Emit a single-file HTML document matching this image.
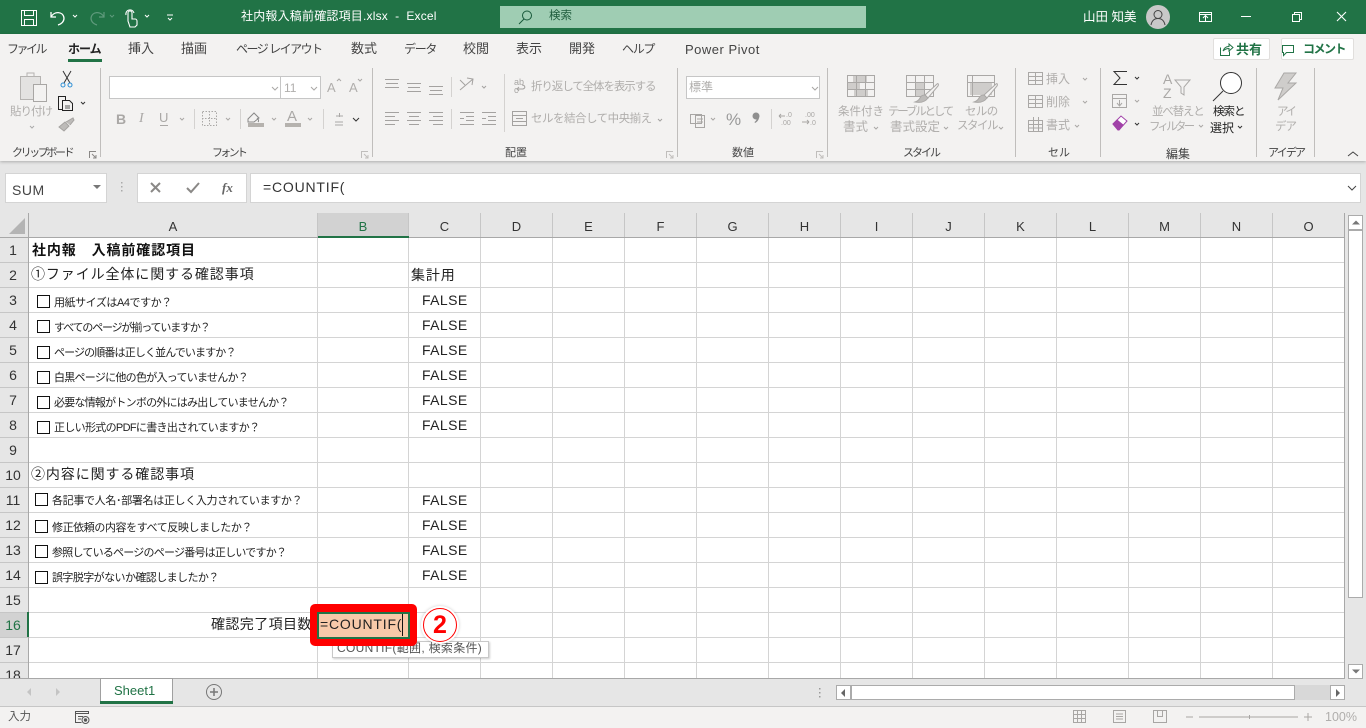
<!DOCTYPE html>
<html lang="ja"><head><meta charset="utf-8"><title>Excel</title>
<style>
html,body{margin:0;padding:0;width:1366px;height:728px;overflow:hidden;background:#e6e6e6}
body{position:relative;font-family:"Liberation Sans","Noto Sans CJK JP",sans-serif;color:#222}
.a{position:absolute;white-space:nowrap;line-height:1}
.b{position:absolute}
.t{font-size:13px;color:#444;top:42px}
.tk{font-size:12px;top:43px}
.g{font-size:11px;color:#444;top:148px}
.d{color:#b0aeac;font-size:11.5px}
.h{position:absolute;top:219px;font-size:13px;text-align:center;color:#333}
.r{position:absolute;left:0;width:26px;text-align:center;font-size:14px;color:#333;line-height:25px;height:25px}
.c{position:absolute;font-size:11px;color:#222;line-height:1;white-space:nowrap}
.f{position:absolute;left:422px;font-size:14px;color:#222;letter-spacing:.4px;line-height:1}
.k{position:absolute;width:11px;height:11px;border:1px solid #111;background:#fff}
.l{position:absolute;font-size:14px;color:#222;line-height:1;white-space:nowrap;letter-spacing:.9px}
svg{position:absolute;overflow:visible}
</style></head><body>

<!-- title bar -->
<div class="b" style="left:0;top:0;width:1366px;height:34px;background:#217346"></div>
<svg style="left:0;top:0" width="1366" height="34" fill="none" stroke="#fff" stroke-width="1">
<path d="M21.5 10.5h15v15h-15zM24.5 10.500v5h9v-5M24.5 25.500v-6h9v6"/>
<path d="M51 12v5h5M51 17c3-6 12-6 13 1 0 4-3 6-6 7" stroke-width="1.3"/>
<path d="M73 15l2 2 2-2" />
<path d="M104 12v5h-5M104 17c-3-6-12-6-13 1 0 4 3 6 6 7" stroke="#5f9a7c" stroke-width="1.2"/>
<path d="M110 15l2 2 2-2" stroke="#5f9a7c"/>
<path d="M128 21v-8a2 2 0 014 0v6h3a2 2 0 012 2v4l-2 2h-5zM126 15a4 4 0 018-2" stroke-width="1.1"/>
<path d="M145 15l2 2 2-2M167 15h6M168 18l2 2 2-2" />
</svg>
<div class="a" style="left:241px;top:10px;font-size:12px;color:#fff;letter-spacing:.2px">社内報入稿前確認項目.xlsx&nbsp; - &nbsp;Excel</div>
<div class="b" style="left:500px;top:6px;width:366px;height:22px;background:#9fcdb3"></div>
<svg style="left:518px;top:9px" width="18" height="16" fill="none" stroke="#17583a"><circle cx="9" cy="6.500" r="4.500"/><path d="M6 10l-5 5"/></svg>
<div class="a" style="left:549px;top:11px;font-size:11.500px;color:#1e5b3c">検索</div>
<div class="a" style="left:1083px;top:11px;font-size:12.500px;color:#fff">山田 知美</div>
<div class="b" style="left:1146px;top:5px;width:24px;height:24px;border-radius:50%;background:#c8c8c8"></div>
<svg style="left:1146px;top:5px" width="24" height="24" fill="none" stroke="#444"><circle cx="12" cy="9.500" r="4"/><path d="M5 20c1-5 4-6.500 7-6.500s6 1.500 7 6.500"/></svg>
<svg style="left:1190px;top:8px" width="170" height="18" fill="none" stroke="#fff">
<path d="M9.500 4.500h12v9h-12zM9.500 6.500h12M13 10l2.500-2.500L18 10M15.500 8v5"/>
<path d="M51 8.500h10"/>
<path d="M102.500 6.500h7v7h-7zM104.500 6.500v-2h7v7h-2"/>
<path d="M147 4l9 9M156 4l-9 9" stroke-width="1.1"/>
</svg>

<!-- ribbon -->
<div class="b" style="left:0;top:34px;width:1366px;height:127px;background:#f3f2f1;box-shadow:0 1px 3px rgba(0,0,0,.25)"></div>
<div class="a t tk" style="left:7px;letter-spacing:-2.5px">ファイル</div>
<div class="a t tk" style="left:68px;font-weight:bold;color:#222;letter-spacing:-1px">ホーム</div>
<div class="b" style="left:68px;top:59px;width:34px;height:3px;background:#217346"></div>
<div class="a t" style="left:128px">挿入</div>
<div class="a t" style="left:181px">描画</div>
<div class="a t tk" style="left:236px;letter-spacing:-1.5px">ページ レイアウト</div>
<div class="a t" style="left:351px">数式</div>
<div class="a t tk" style="left:404px;letter-spacing:-1.300px">データ</div>
<div class="a t" style="left:463px">校閲</div>
<div class="a t" style="left:516px">表示</div>
<div class="a t" style="left:569px">開発</div>
<div class="a t tk" style="left:622px;letter-spacing:-1.300px">ヘルプ</div>
<div class="a" style="left:685px;top:43px;font-size:13px;color:#444;letter-spacing:.5px">Power Pivot</div>

<!-- share / comment -->
<div class="b" style="left:1213px;top:38px;width:57px;height:22px;background:#fff;border:1px solid #e1dfdd;box-sizing:border-box;border-radius:2px"></div>
<div class="b" style="left:1281px;top:38px;width:73px;height:22px;background:#fff;border:1px solid #e1dfdd;box-sizing:border-box;border-radius:2px"></div>
<svg style="left:1219px;top:42px" width="130" height="15" fill="none" stroke="#217346"><path d="M1.500 5.500v8h9v-4M4 9c1-3 3-4.500 6-4.500V2l4 3.500-4 3.500V6.500c-2 0-4 .5-6 2.500"/><path d="M63.500 3.500h11v7h-7l-3 3v-3h-1z"/></svg>
<div class="a" style="left:1236px;top:43px;font-size:13px;font-weight:bold;color:#217346">共有</div>
<div class="a" style="left:1303px;top:43px;font-size:12px;font-weight:bold;color:#217346;letter-spacing:-1.500px">コメント</div>

<!-- ribbon separators -->
<svg style="left:0;top:0" width="1366" height="165" stroke="#c0bebc" fill="none">
<path d="M100.500 68v89M372.500 68v89M677.500 68v89M827.500 68v89M1015.500 68v89M1100.500 68v89M1256.500 68v89M1314.500 68v89"/>
<path stroke="#d4d2d0" d="M194.500 109v20M240.500 109v20M323.500 109v20M451.500 77v20M451.500 109v20M504.500 74v58M771.500 109v20"/>
</svg>

<!-- clipboard -->
<svg style="left:0;top:0" width="100" height="140" fill="none">
<path d="M20.500 76.500h20v23h-20z" fill="#e3e2e1" stroke="#b5b3b1"/>
<path d="M27 76v-3h7v3" stroke="#b5b3b1"/>
<path d="M33.500 84.500h13v17h-13z" fill="#f3f2f1" stroke="#a8a6a4"/>
<path d="M63 71l7 12M71 71l-7 12" stroke="#333"/>
<circle cx="63" cy="85" r="2" stroke="#2d8fd5"/><circle cx="70" cy="85" r="2" stroke="#2d8fd5"/>
<path d="M58.500 96.500h7v13h-7z" stroke="#222"/><path d="M62.500 100.500h7l3 3v7h-10z" fill="#f3f2f1" stroke="#222"/>
<path d="M65 106h5M65 108h5" stroke="#222" stroke-width=".7"/>
<path d="M81 102l2 2 2-2" stroke="#333"/>
<path d="M59 127l6-5 4 4-5 5zM66 122l7-4 1 2-4 5" fill="#bdbbb9" stroke="#a5a3a1"/>
<path d="M30 126l2 2 2-2" stroke="#aaa"/>
</svg>
<div class="a d" style="left:10px;top:107px;letter-spacing:-1px">貼り付け</div>
<div class="a g" style="left:12px;letter-spacing:-2.400px">クリップボード</div>
<svg style="left:89px;top:151px" width="8" height="8" fill="none" stroke="#8a8886"><path d="M.5 7V.5H7M3 3l4 4M7 4v3H4"/></svg>

<!-- font -->
<div class="b" style="left:109px;top:76px;width:172px;height:23px;background:#fff;border:1px solid #c6c6c6;box-sizing:border-box"></div>
<div class="b" style="left:280px;top:76px;width:41px;height:23px;background:#fff;border:1px solid #c6c6c6;box-sizing:border-box"></div>
<div class="a d" style="left:284px;top:82px;font-size:12px">11</div>
<div class="a d" style="left:327px;top:81px;font-size:13px">A</div>
<div class="a d" style="left:349px;top:81px;font-size:13px">A</div>
<svg style="left:0;top:0" width="380" height="135" fill="none" stroke="#aaa8a6">
<path d="M272 87l3 3 3-3M311 87l3 3 3-3M337 81l2-2 2 2M358 79l2 2 2-2"/>
<path d="M180 118l2 2 2-2M226 118l2 2 2-2M272 118l2 2 2-2M308 118l2 2 2-2"/>
<path d="M202.500 111.500h14v14h-14z" stroke-dasharray="1.500 1.500"/><path d="M202 118.500h15M209.500 111v14" stroke-dasharray="1.500 1.500"/>
<path d="M248 119l6-6 5 5-5 4h-6zM257 118c2 2 2 3 1 4" stroke="#888"/>
<path d="M160 125.500h8" />
<path d="M336 116h7M339.500 113v4M335 122h8M335 125h8"/>
<path d="M353 118l3 3 3-3" stroke="#333"/>
</svg>
<div class="b" style="left:248px;top:123px;width:16px;height:4px;background:#b5b2ae"></div>
<div class="b" style="left:285px;top:123px;width:16px;height:4px;background:#b5b2ae"></div>
<div class="a" style="left:116px;top:112px;font-size:14px;font-weight:bold;color:#aaa8a6">B</div>
<div class="a" style="left:139px;top:112px;font-size:14px;font-style:italic;font-family:'Liberation Serif',serif;color:#aaa8a6">I</div>
<div class="a" style="left:159px;top:111px;font-size:13px;color:#aaa8a6">U</div>
<div class="a" style="left:287px;top:109px;font-size:15px;color:#aaa8a6">A</div>
<div class="a g" style="left:212px;letter-spacing:-2.700px">フォント</div>
<svg style="left:361px;top:151px" width="8" height="8" fill="none" stroke="#c0bebc"><path d="M.5 7V.5H7M3 3l4 4M7 4v3H4"/></svg>

<!-- alignment -->
<svg style="left:0;top:0" width="680" height="135" fill="none" stroke="#a4a2a0">
<path d="M385 79.500h14M386 83.500h12M385 87.500h14"/>
<path d="M407 83.500h14M408 87.500h12M407 91.500h14"/>
<path d="M429 86.500h14M430 90.500h12M429 94.500h14"/>
<path d="M385 112.500h14M385 116.500h10M385 120.500h14M385 124.500h10"/>
<path d="M407 112.500h14M409 116.500h10M407 120.500h14M409 124.500h10"/>
<path d="M429 112.500h14M433 116.500h10M429 120.500h14M433 124.500h10"/>
<path d="M460 90l13-11M467 78l6 1-1 6M460 80l5 5"/><path d="M482 86l2 2 2-2"/>
<path d="M460 112.500h14M466 116.500h8M466 120.500h8M460 124.500h14M460 118.500h4M482 112.500h14M488 116.500h8M488 120.500h8M482 124.500h14M482 118.500h4"/>
<path d="M512.500 111.500h14v14h-14zM513 115.500h13M513 121.500h13M516 118.500h7"/>
<path d="M522 85c3 0 4 3 1 4h-6M519 87l-2 2 2 2"/>
<path d="M658 119l2 2 2-2"/>
</svg>
<div class="a" style="left:514px;top:78px;font-size:9px;color:#a8a6a4">ab</div>
<div class="a" style="left:514px;top:86px;font-size:9px;color:#a8a6a4">c</div>
<div class="a d" style="left:531px;top:82px;letter-spacing:-1.100px">折り返して全体を表示する</div>
<div class="a d" style="left:531px;top:114px;letter-spacing:-.5px">セルを結合して中央揃え</div>
<div class="a g" style="left:505px">配置</div>
<svg style="left:666px;top:151px" width="8" height="8" fill="none" stroke="#c0bebc"><path d="M.5 7V.5H7M3 3l4 4M7 4v3H4"/></svg>

<!-- number -->
<div class="b" style="left:686px;top:76px;width:134px;height:23px;background:#fff;border:1px solid #c6c6c6;box-sizing:border-box"></div>
<div class="a d" style="left:689px;top:81px;font-size:12px">標準</div>
<svg style="left:0;top:0" width="830" height="135" fill="none" stroke="#a8a6a4">
<path d="M812 87l3 3 3-3"/>
<path d="M690.500 114.500h11v9h-11zM695.500 115.500h9v12h-9zM697 119h6M697 122h6" />
<path d="M711 118l2 2 2-2"/>
<path d="M779 116h6M779 116l2-2M779 116l2 2M802 122h7M809 122l-2-2M809 122l-2 2"/>
</svg>
<div class="a" style="left:726px;top:111px;font-size:17px;color:#999">%</div>
<svg style="left:750px;top:110px" width="12" height="16"><circle cx="6" cy="6" r="3.500" fill="#8f8f8f"/><path d="M9 6c.5 3-1.500 6-4 7l-.5-1c1.500-1 2.500-2.500 2.500-5z" fill="#8f8f8f"/></svg>
<div class="a" style="left:786px;top:112px;font-size:7px;color:#a8a6a4">.0</div>
<div class="a" style="left:781px;top:120px;font-size:7px;color:#a8a6a4">.00</div>
<div class="a" style="left:805px;top:112px;font-size:7px;color:#a8a6a4">.00</div>
<div class="a" style="left:810px;top:120px;font-size:7px;color:#a8a6a4">.0</div>
<div class="a g" style="left:732px">数値</div>
<svg style="left:816px;top:151px" width="8" height="8" fill="none" stroke="#c0bebc"><path d="M.5 7V.5H7M3 3l4 4M7 4v3H4"/></svg>

<!-- styles -->
<svg style="left:0;top:0" width="1020" height="135" fill="none" stroke="#aaa8a6">
<path d="M847.500 75.500h27v21h-27z"/><path d="M853 76h14v7h-14zM848 83h12v7h-12zM854 90h14v6h-14z" fill="#cfcdcb" stroke="none"/><path d="M847 82.500h28M847 89.500h28M856.500 75v21M865.500 75v21"/>
<path d="M906.500 75.500h27v21h-27z"/><path d="M915 83h10v13h-10z" fill="#cfcdcb" stroke="none"/><path d="M906 82.500h28M906 89.500h28M915.500 75v21M924.500 75v21"/>
<path d="M967.500 75.500h27v21h-27z"/><path d="M970 83h22v12h-22z" fill="#cfcdcb" stroke="none"/><path d="M967 82.500h28M972.500 75v21"/>
<path d="M937 84l-12 11 3 3 10-12c1-2 0-3-1-2z" fill="#f3f2f1"/><path d="M925 95c-3 0-4 1-5 3s-2 3-5 4c5 1 10 0 13-4z" fill="#bdbbb9"/>
<path d="M996 84l-12 11 3 3 10-12c1-2 0-3-1-2z" fill="#f3f2f1"/><path d="M984 95c-3 0-4 1-5 3s-2 3-5 4c5 1 10 0 13-4z" fill="#bdbbb9"/>
<path d="M874 127l2 2 2-2M944 127l2 2 2-2M999 127l2 2 2-2"/>
</svg>
<div class="a d" style="left:838px;top:107px">条件付き</div>
<div class="a d" style="left:843px;top:121px;font-size:12.500px">書式</div>
<div class="a d" style="left:888px;top:107px;letter-spacing:-2.200px">テーブルとして</div>
<div class="a d" style="left:890px;top:121px;font-size:12.500px">書式設定</div>
<div class="a d" style="left:965px;top:107px;letter-spacing:-.6px">セルの</div>
<div class="a d" style="left:957px;top:121px;letter-spacing:-1.500px;font-size:11.500px">スタイル</div>
<div class="a g" style="left:903px;letter-spacing:-2px">スタイル</div>

<!-- cells -->
<svg style="left:0;top:0" width="1100" height="135" fill="none" stroke="#aaa8a6">
<path d="M1028.500 72.500h14v12h-14zM1028 76.500h15M1028 80.500h15M1035.500 72v13"/>
<path d="M1028.500 95.500h14v12h-14zM1028 99.500h15M1028 103.500h15M1035.500 95v13"/>
<path d="M1028.500 120.500h14v11h-14zM1028 124.500h15M1028 128h15M1033.500 117v14M1038.500 117v14"/>
<path d="M1083 78l2 2 2-2M1083 101l2 2 2-2M1075 125l2 2 2-2"/>
</svg>
<div class="a d" style="left:1046px;top:73px;font-size:12px">挿入</div>
<div class="a d" style="left:1046px;top:96px;font-size:12px">削除</div>
<div class="a d" style="left:1046px;top:119px;font-size:12px">書式</div>
<div class="a g" style="left:1048px">セル</div>

<!-- editing -->
<svg style="left:0;top:0" width="1366" height="165" fill="none">
<path d="M1127 71.500h-13l6 6.500-6 6.500h13" stroke="#333"/>
<path d="M1135 77l2 2 2-2M1135 123l2 2 2-2" stroke="#333"/>
<path d="M1112.500 94.500h14v13h-14zM1112 98.500h15M1119.500 100v6M1117 103l2.500 3 2.500-3" stroke="#aaa8a6"/>
<path d="M1135 100l2 2 2-2" stroke="#aaa8a6"/>
<path d="M1113 124l8-8 6 5-8 9h-1z" fill="#fff" stroke="#a142a8"/><path d="M1113 124l4-4 6 5-4 5h-1z" fill="#a142a8" stroke="#a142a8"/>
<path d="M1175 80h15l-6 7v8l-3-2v-6z" stroke="#aaa8a6"/>
<path d="M1199 125l2 2 2-2" stroke="#aaa8a6"/>
<circle cx="1231" cy="83" r="10.500" stroke="#333" fill="#fff"/><path d="M1223 91l-10 10" stroke="#333"/>
<path d="M1238 126l2 2 2-2" stroke="#333"/>
<path d="M1284 73h12l-8 10h8l-18 17 5-12h-8z" fill="#cfcdcb" stroke="#aaa8a6"/>
<path d="M1348 156l5-4 5 4" stroke="#444"/>
</svg>
<div class="a" style="left:1163px;top:72px;font-size:14px;line-height:14px;color:#aaa8a6;white-space:pre">A
Z</div>
<div class="a d" style="left:1152px;top:107px;letter-spacing:-1.200px">並べ替えと</div>
<div class="a d" style="left:1149px;top:122px;letter-spacing:-2.800px">フィルター</div>
<div class="a" style="left:1213px;top:107px;font-size:11.500px;color:#222;letter-spacing:-1px">検索と</div>
<div class="a" style="left:1210px;top:122px;font-size:12px;color:#222">選択</div>
<div class="a g" style="left:1166px;font-size:12px">編集</div>
<div class="a d" style="left:1277px;top:107px;letter-spacing:-2.500px">アイ</div>
<div class="a d" style="left:1275px;top:122px;letter-spacing:-1px">デア</div>
<div class="a g" style="left:1268px;letter-spacing:-1.800px">アイデア</div>

<!-- formula bar -->
<div class="b" style="left:5px;top:173px;width:102px;height:30px;background:#fff;border:1px solid #d4d4d4;box-sizing:border-box"></div>
<div class="a" style="left:12px;top:183px;font-size:14px;color:#444;letter-spacing:.5px">SUM</div>
<svg style="left:92px;top:184px" width="10" height="6"><path d="M1 1h8L5 5z" fill="#777"/></svg>
<svg style="left:120px;top:180px" width="4" height="14" fill="#aaa"><rect x="1" y="2" width="1.500" height="1.500"/><rect x="1" y="6" width="1.500" height="1.500"/><rect x="1" y="10" width="1.500" height="1.500"/></svg>
<div class="b" style="left:137px;top:173px;width:110px;height:30px;background:#fff;border:1px solid #d4d4d4;box-sizing:border-box"></div>
<svg style="left:137px;top:173px" width="110" height="30" fill="none" stroke="#8a8886" stroke-width="2"><path d="M14 10l9 9M23 10l-9 9"/><path d="M50 15l4 4 8-9"/></svg>
<div class="a" style="left:222px;top:181px;font-size:13px;font-style:italic;font-weight:bold;font-family:'Liberation Serif',serif;color:#666">fx</div>
<div class="b" style="left:250px;top:173px;width:1111px;height:30px;background:#fff;border:1px solid #d4d4d4;box-sizing:border-box"></div>
<div class="a" style="left:263px;top:180px;font-size:14px;color:#333;letter-spacing:.8px">=COUNTIF(</div>
<svg style="left:1347px;top:185px" width="10" height="6" fill="none" stroke="#444"><path d="M1 1l4 4 4-4"/></svg>

<!-- sheet -->
<div class="b" style="left:0;top:213px;width:1345px;height:466px;background:#fff"></div>
<div class="b" style="left:0;top:213px;width:1345px;height:24px;background:#e6e6e6"></div>
<div class="b" style="left:0;top:238px;width:28px;height:441px;background:#e6e6e6"></div>
<div class="b" style="left:318px;top:213px;width:91px;height:24px;background:#d2d2d2"></div>
<div class="b" style="left:0;top:612px;width:28px;height:25px;background:#d2d2d2"></div>
<svg style="left:8px;top:217px" width="18" height="18"><path d="M17 1v16H1z" fill="#b4b4b4"/></svg>
<svg style="left:0;top:0" width="1366" height="728" fill="none" stroke="#d4d4d4">
<path d="M317.500 238V678M408.500 238V610M408.500 646V678M480.500 238V678M552.500 238V678M624.500 238V678M696.500 238V678M768.500 238V678M840.500 238V678M912.500 238V678M984.500 238V678M1056.500 238V678M1128.500 238V678M1200.500 238V678M1272.500 238V678M1344.500 213V678"/>
<path d="M29 262.500H1345M29 287.500H1345M29 312.500H1345M29 337.500H1345M29 362.500H1345M29 387.500H1345M29 412.500H1345M29 437.500H1345M29 462.500H1345M29 487.500H1345M29 512.500H1345M29 537.500H1345M29 562.500H1345M29 587.500H1345M29 612.500H1345M29 637.500H1345M29 662.500H1345"/>
<path stroke="#c6c6c6" d="M317.500 213V237M408.500 213V237M480.500 213V237M552.500 213V237M624.500 213V237M696.500 213V237M768.500 213V237M840.500 213V237M912.500 213V237M984.500 213V237M1056.500 213V237M1128.500 213V237M1200.500 213V237M1272.500 213V237"/>
<path stroke="#c6c6c6" d="M0 262.500H28M0 287.500H28M0 312.500H28M0 337.500H28M0 362.500H28M0 387.500H28M0 412.500H28M0 437.500H28M0 462.500H28M0 487.500H28M0 512.500H28M0 537.500H28M0 562.500H28M0 587.500H28M0 612.500H28M0 637.500H28M0 662.500H28"/>
<path stroke="#a8a8a8" d="M28.500 213V679M0 237.500H1345M0 678.500H1345M1344.500 213V679"/>
</svg>
<div class="b" style="left:318px;top:236px;width:91px;height:2px;background:#217346"></div>
<div class="b" style="left:27px;top:612px;width:2px;height:25px;background:#217346"></div>

<div class="h" style="left:29px;width:288px">A</div>
<div class="h" style="left:318px;width:90px;color:#217346">B</div>
<div class="h" style="left:409px;width:71px">C</div>
<div class="h" style="left:481px;width:71px">D</div>
<div class="h" style="left:553px;width:71px">E</div>
<div class="h" style="left:625px;width:71px">F</div>
<div class="h" style="left:697px;width:71px">G</div>
<div class="h" style="left:769px;width:71px">H</div>
<div class="h" style="left:841px;width:71px">I</div>
<div class="h" style="left:913px;width:71px">J</div>
<div class="h" style="left:985px;width:71px">K</div>
<div class="h" style="left:1057px;width:71px">L</div>
<div class="h" style="left:1129px;width:71px">M</div>
<div class="h" style="left:1201px;width:71px">N</div>
<div class="h" style="left:1273px;width:71px">O</div>

<div class="r" style="top:238px">1</div><div class="r" style="top:263px">2</div><div class="r" style="top:288px">3</div><div class="r" style="top:313px">4</div><div class="r" style="top:338px">5</div><div class="r" style="top:363px">6</div><div class="r" style="top:388px">7</div><div class="r" style="top:413px">8</div><div class="r" style="top:438px">9</div><div class="r" style="top:463px">10</div><div class="r" style="top:488px">11</div><div class="r" style="top:513px">12</div><div class="r" style="top:538px">13</div><div class="r" style="top:563px">14</div><div class="r" style="top:588px">15</div><div class="r" style="top:613px;color:#217346">16</div><div class="r" style="top:638px">17</div><div class="r" style="top:663px">18</div>

<div class="l" style="left:32px;top:243px;font-weight:bold;color:#111">社内報　入稿前確認項目</div>
<div class="l" style="left:31px;top:267px">①ファイル全体に関する確認事項</div>
<div class="l" style="left:411px;top:268px">集計用</div>

<div class="k" style="left:37px;top:295px"></div><div class="c" style="left:54px;top:298px;letter-spacing:-.45px">用紙サイズはA4ですか？</div>
<div class="k" style="left:37px;top:320px"></div><div class="c" style="left:54px;top:323px;letter-spacing:-1.150px">すべてのページが揃っていますか？</div>
<div class="k" style="left:37px;top:346px"></div><div class="c" style="left:54px;top:348px;letter-spacing:-.87px">ページの順番は正しく並んでいますか？</div>
<div class="k" style="left:37px;top:371px"></div><div class="c" style="left:54px;top:373px;letter-spacing:-.73px">白黒ページに他の色が入っていませんか？</div>
<div class="k" style="left:37px;top:396px"></div><div class="c" style="left:54px;top:398px;letter-spacing:-.77px">必要な情報がトンボの外にはみ出していませんか？</div>
<div class="k" style="left:37px;top:421px"></div><div class="c" style="left:54px;top:423px;letter-spacing:-.68px">正しい形式のPDFに書き出されていますか？</div>
<div class="l" style="left:31px;top:467px">②内容に関する確認事項</div>
<div class="k" style="left:35px;top:493px"></div><div class="c" style="left:52px;top:496px;letter-spacing:-.33px">各記事で人名･部署名は正しく入力されていますか？</div>
<div class="k" style="left:35px;top:520px"></div><div class="c" style="left:52px;top:523px;letter-spacing:-.41px">修正依頼の内容をすべて反映しましたか？</div>
<div class="k" style="left:35px;top:545px"></div><div class="c" style="left:52px;top:548px;letter-spacing:-.77px">参照しているページのページ番号は正しいですか？</div>
<div class="k" style="left:35px;top:571px"></div><div class="c" style="left:52px;top:573px;letter-spacing:-.58px">誤字脱字がないか確認しましたか？</div>

<div class="f" style="top:293px">FALSE</div><div class="f" style="top:318px">FALSE</div><div class="f" style="top:343px">FALSE</div><div class="f" style="top:368px">FALSE</div><div class="f" style="top:393px">FALSE</div><div class="f" style="top:418px">FALSE</div><div class="f" style="top:493px">FALSE</div><div class="f" style="top:518px">FALSE</div><div class="f" style="top:543px">FALSE</div><div class="f" style="top:568px">FALSE</div>

<div class="l" style="left:211px;top:617px;letter-spacing:.4px;width:100px;overflow:hidden">確認完了項目数</div>

<!-- tooltip -->
<div class="b" style="left:332px;top:641px;width:157px;height:17px;background:#fff;border:1px solid #c8c8c8;box-sizing:border-box;box-shadow:1px 1px 2px rgba(0,0,0,.2)"></div>
<div class="a" style="left:337px;top:642px;font-size:12px;color:#555;letter-spacing:.3px">COUNTIF(範囲, 検索条件)</div>

<!-- active cell -->
<div class="b" style="left:310px;top:604px;width:107px;height:42px;background:#f00;border-radius:5px"></div>
<div class="b" style="left:317px;top:612px;width:93px;height:27px;background:#f7c9a9;border:2px solid #217346;box-sizing:border-box"></div>
<div class="a" style="left:320px;top:617px;font-size:14px;color:#222;letter-spacing:.8px">=COUNTIF(</div>
<div class="b" style="left:402px;top:614px;width:1px;height:22px;background:#111"></div>
<div class="b" style="left:421px;top:606px;width:38px;height:38px;border-radius:50%;background:#fff;box-shadow:0 0 3px rgba(0,0,0,.2)"></div>
<div class="b" style="left:423px;top:608px;width:34px;height:34px;border-radius:50%;border:1.500px solid #f00;box-sizing:border-box"></div>
<div class="a" style="left:433px;top:613px;font-size:25px;font-weight:bold;color:#f00">2</div>

<!-- vertical scrollbar -->
<div class="b" style="left:1345px;top:213px;width:21px;height:466px;background:#e6e6e6"></div>
<div class="b" style="left:1348px;top:215px;width:15px;height:15px;background:#fff;border:1px solid #ababab;box-sizing:border-box"></div>
<svg style="left:1352px;top:220px" width="8" height="5"><path d="M0 4.500L4 .5l4 4z" fill="#777"/></svg>
<div class="b" style="left:1348px;top:230px;width:15px;height:368px;background:#fff;border:1px solid #ababab;box-sizing:border-box"></div>
<div class="b" style="left:1348px;top:664px;width:15px;height:15px;background:#fff;border:1px solid #ababab;box-sizing:border-box"></div>
<svg style="left:1352px;top:669px" width="8" height="5"><path d="M0 .5L4 4.500l4-4z" fill="#777"/></svg>

<!-- tab bar -->
<div class="b" style="left:0;top:679px;width:1366px;height:28px;background:#e6e6e6;border-bottom:1px solid #c6c6c6;box-sizing:border-box"></div>
<div class="b" style="left:0;top:678px;width:1345px;height:1px;background:#a8a8a8"></div>
<svg style="left:26px;top:688px" width="36" height="9" fill="#c4c4c4"><path d="M5 0v8L1 4zM30 0v8l4-4z"/></svg>
<div class="b" style="left:100px;top:678px;width:73px;height:26px;background:#fff;border:1px solid #a0a0a0;border-top-color:#a0a0a0;border-bottom:0;box-sizing:border-box"></div>
<div class="b" style="left:100px;top:701px;width:73px;height:3px;background:#217346"></div>
<div class="a" style="left:114px;top:684px;font-size:13px;color:#217346">Sheet1</div>
<svg style="left:206px;top:684px" width="16" height="16" fill="none" stroke="#777"><circle cx="8" cy="8" r="7.500"/><path d="M8 4v8M4 8h8" stroke-width="1.500"/></svg>
<svg style="left:818px;top:687px" width="4" height="12" fill="#999"><rect x="1" y="1" width="1.500" height="1.500"/><rect x="1" y="5" width="1.500" height="1.500"/><rect x="1" y="9" width="1.500" height="1.500"/></svg>
<div class="b" style="left:836px;top:685px;width:15px;height:15px;background:#fff;border:1px solid #ababab;box-sizing:border-box"></div>
<svg style="left:840px;top:689px" width="6" height="8"><path d="M5 0v8L1 4z" fill="#666"/></svg>
<div class="b" style="left:851px;top:685px;width:444px;height:15px;background:#fff;border:1px solid #ababab;box-sizing:border-box"></div>
<div class="b" style="left:1295px;top:685px;width:35px;height:15px;background:#d8d8d8"></div>
<div class="b" style="left:1330px;top:685px;width:15px;height:15px;background:#fff;border:1px solid #ababab;box-sizing:border-box"></div>
<svg style="left:1335px;top:689px" width="6" height="8"><path d="M1 0v8l4-4z" fill="#666"/></svg>

<!-- status bar -->
<div class="b" style="left:0;top:707px;width:1366px;height:21px;background:#f3f2f1"></div>
<div class="a" style="left:8px;top:712px;font-size:11.500px;color:#555">入力</div>
<svg style="left:75px;top:711px" width="16" height="14" fill="none" stroke="#555"><path d="M.5.500h13v2h-13zM.5 2.500v9h6M3 5.500h5M3 8h3"/><circle cx="10.500" cy="9" r="3.500"/><circle cx="10.500" cy="9" r="1.200" fill="#555"/></svg>
<svg style="left:0;top:0" width="1366" height="728" fill="none" stroke="#a8a6a4">
<path d="M1073.500 710.500h12v12h-12zM1073 714.500h13M1073 718.500h13M1077.500 710v13M1081.500 710v13"/>
<path d="M1113.500 710.500h12v12h-12zM1116 714h7M1116 716.500h7M1116 719h7"/>
<path d="M1153.500 710.500h13v12h-13zM1157.500 710v6.500h5V710"/>
<path d="M1186 717h7M1199 717h99M1249.500 715v4M1304 717h8M1308 713v8"/>
</svg>
<div class="a" style="left:1325px;top:711px;font-size:12.500px;color:#b0aeac">100%</div>
</body></html>
